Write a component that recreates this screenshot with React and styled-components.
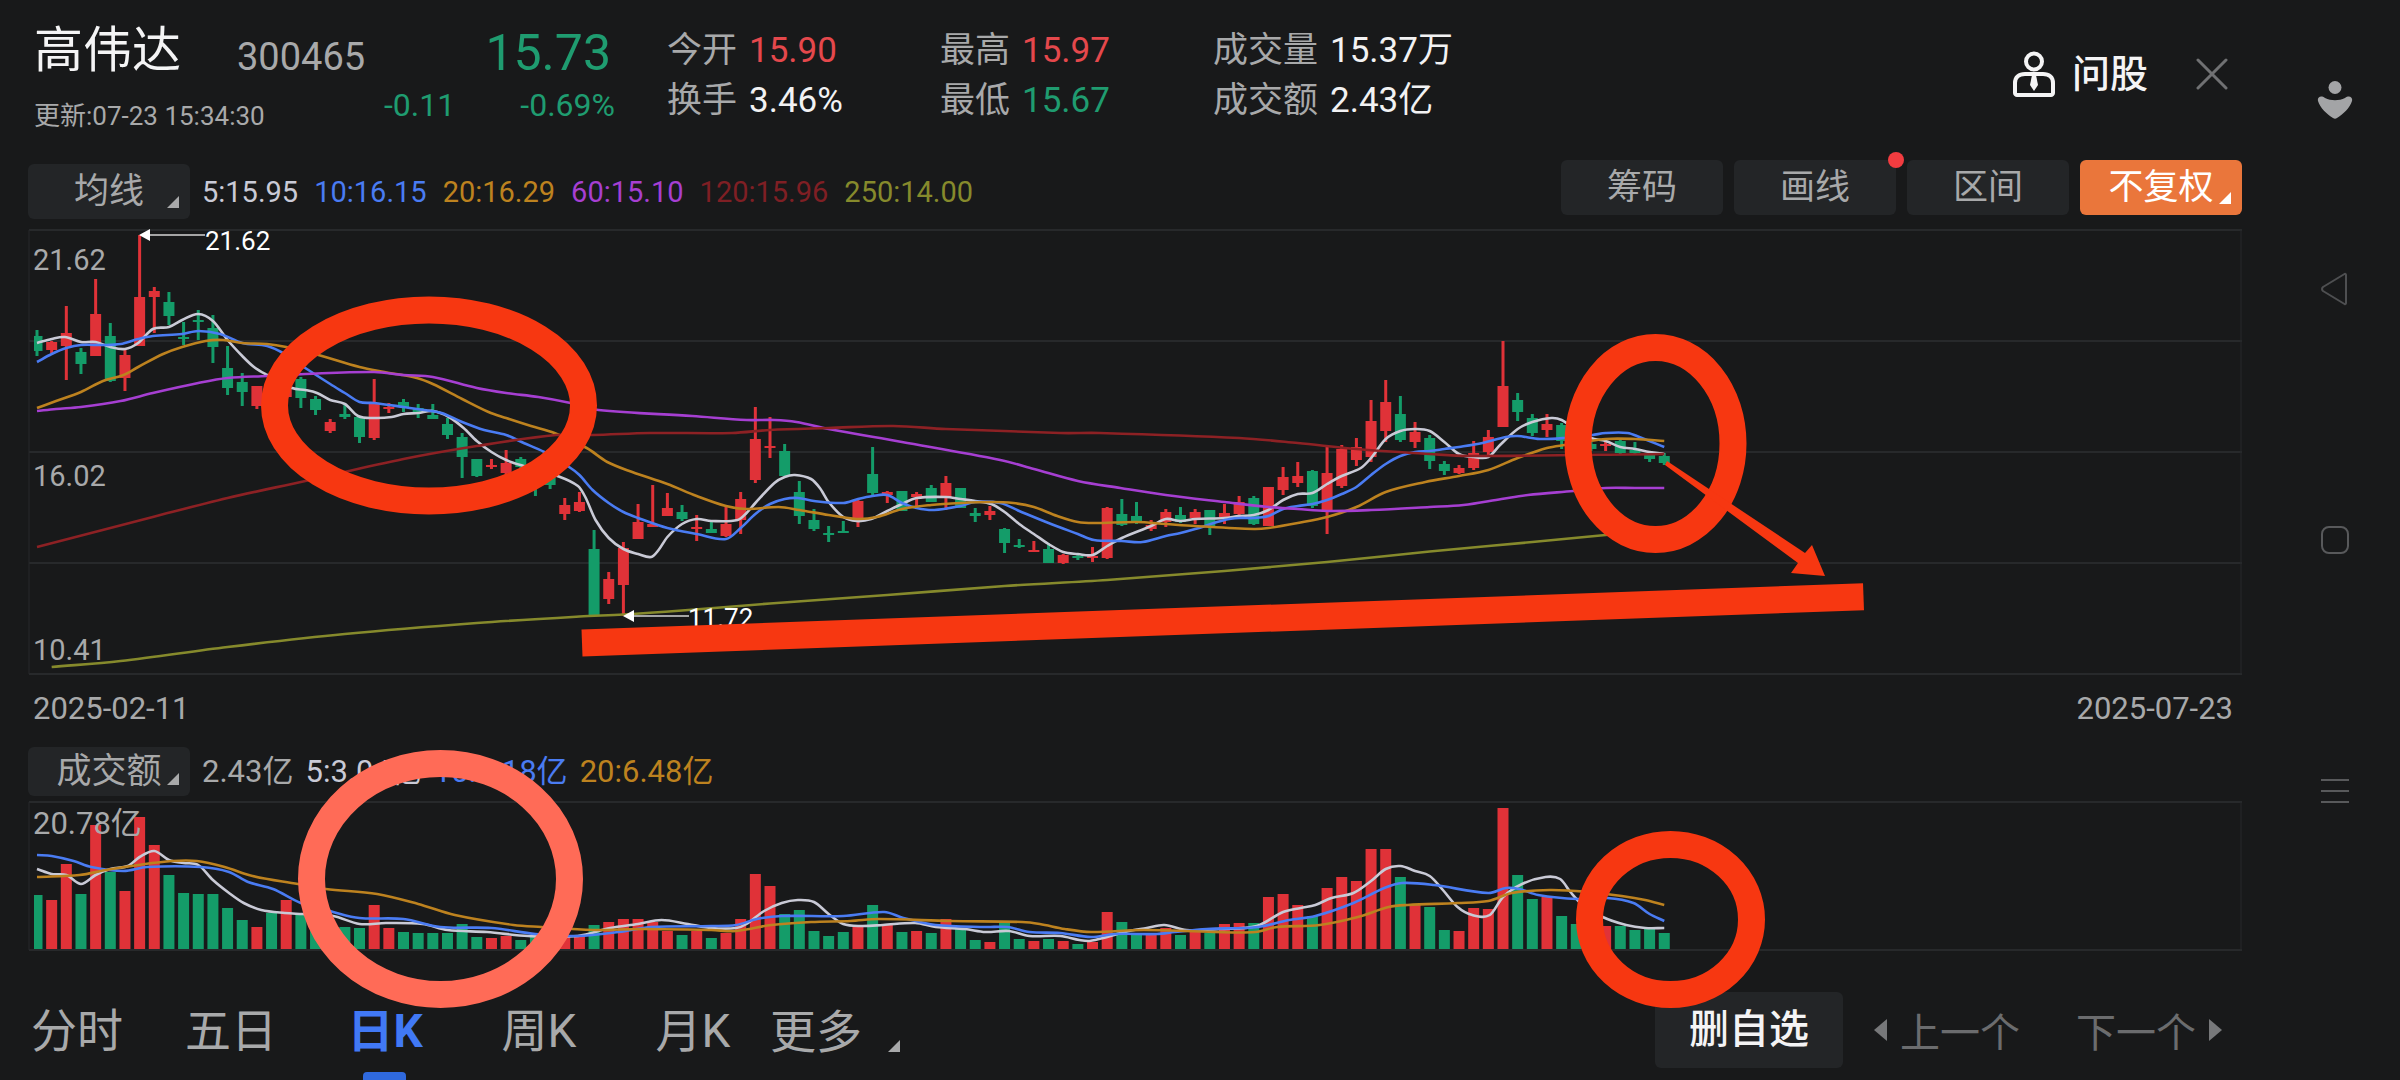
import React, { useState } from 'react';
import styled, { createGlobalStyle } from 'styled-components';

const UP = '#e03238';
const DOWN = '#149c69';
const MUTED = '#a8a9aa';
const LINE = '#27292b';
const MARK = '#f73711';

// [high, body top, body bottom, low, is up, turnover bar height]
const days = [
    [100, 106, 121, 126, 0, 54], [111, 112, 120, 123, 1, 49], [76, 103, 116, 150, 1, 85], [118, 122, 134, 144, 0, 55],
    [49, 84, 126, 126, 1, 124], [93, 106, 151, 152, 0, 77], [118, 125, 148, 161, 1, 58], [5, 67, 116, 116, 1, 132],
    [57, 61, 67, 103, 1, 104], [62, 72, 86, 95, 0, 74], [92, 107, 108, 115, 0, 56], [80, 90, 91, 110, 0, 55],
    [85, 98, 117, 133, 0, 55], [116, 138, 158, 165, 0, 41], [143, 152, 162, 176, 0, 29], [156, 156, 176, 179, 1, 22],
    [150, 152, 170, 174, 0, 36], [158, 158, 167, 170, 1, 49], [147, 149, 168, 178, 0, 34], [166, 169, 180, 185, 0, 22],
    [189, 192, 201, 203, 1, 26], [175, 184, 187, 189, 0, 22], [187, 187, 207, 213, 0, 21], [149, 173, 208, 210, 1, 44],
    [173, 177, 178, 183, 1, 21], [169, 172, 177, 182, 0, 17], [174, 178, 182, 188, 0, 16], [174, 185, 189, 189, 0, 16],
    [188, 194, 205, 209, 0, 16], [203, 207, 227, 248, 0, 25], [229, 229, 246, 247, 0, 12], [229, 235, 237, 239, 1, 11],
    [220, 233, 243, 245, 1, 13], [227, 229, 237, 238, 0, 9], [233, 238, 255, 266, 0, 13], [240, 243, 255, 259, 0, 12],
    [268, 275, 284, 290, 1, 12], [262, 272, 281, 282, 1, 12], [300, 319, 385, 385, 0, 24], [342, 349, 369, 374, 1, 27],
    [312, 318, 355, 386, 1, 30], [274, 292, 309, 309, 1, 30], [255, 294, 297, 297, 1, 27], [263, 278, 286, 286, 1, 18],
    [275, 282, 289, 291, 0, 14], [285, 297, 298, 311, 1, 18], [292, 299, 303, 303, 0, 11], [277, 294, 306, 307, 1, 16],
    [262, 269, 290, 304, 1, 30], [177, 209, 250, 253, 1, 75], [187, 216, 218, 228, 1, 63], [214, 221, 246, 246, 0, 35],
    [251, 262, 286, 294, 0, 39], [279, 290, 299, 301, 0, 18], [296, 303, 304, 312, 0, 13], [291, 301, 303, 303, 0, 17],
    [269, 271, 290, 297, 1, 23], [217, 244, 263, 265, 0, 44], [261, 262, 265, 273, 1, 25], [261, 261, 281, 281, 0, 17],
    [262, 264, 267, 277, 1, 18], [255, 258, 272, 272, 0, 16], [246, 253, 268, 280, 1, 30], [258, 258, 278, 278, 0, 20],
    [278, 283, 286, 292, 0, 9], [276, 281, 285, 290, 1, 7], [298, 299, 313, 323, 0, 27], [309, 315, 316, 318, 0, 10],
    [311, 320, 322, 322, 1, 8], [313, 319, 333, 333, 0, 10], [324, 325, 333, 334, 1, 8], [324, 326, 328, 330, 0, 5],
    [317, 326, 327, 332, 1, 7], [277, 278, 328, 329, 1, 37], [269, 284, 295, 296, 0, 27], [272, 286, 291, 294, 0, 16],
    [290, 295, 299, 301, 1, 15], [279, 282, 292, 297, 1, 21], [277, 285, 292, 293, 0, 14], [279, 282, 288, 294, 1, 17],
    [280, 280, 297, 305, 0, 16], [274, 283, 287, 294, 1, 25], [266, 272, 284, 285, 1, 26], [266, 268, 294, 295, 0, 26],
    [257, 257, 296, 296, 1, 52], [237, 247, 260, 265, 1, 55], [232, 246, 253, 257, 1, 44], [240, 241, 276, 278, 0, 33],
    [217, 243, 282, 304, 1, 61], [215, 219, 256, 258, 1, 72], [208, 217, 230, 236, 1, 68], [170, 191, 227, 232, 1, 100],
    [150, 172, 201, 212, 1, 100], [166, 184, 210, 212, 0, 72], [192, 202, 212, 218, 1, 44], [205, 208, 231, 239, 0, 42],
    [231, 234, 241, 245, 0, 19], [235, 238, 243, 244, 1, 18], [211, 223, 238, 240, 1, 41], [200, 207, 222, 225, 1, 40],
    [111, 156, 197, 197, 1, 141], [163, 170, 182, 191, 0, 74], [184, 188, 203, 206, 0, 50], [184, 194, 200, 207, 1, 52],
    [193, 195, 211, 219, 0, 33], [205, 208, 218, 222, 0, 25], [212, 214, 219, 221, 0, 25], [212, 214, 216, 221, 1, 23],
    [210, 211, 223, 225, 0, 23], [212, 220, 223, 225, 0, 19], [223, 225, 229, 232, 0, 20], [223, 226, 233, 235, 0, 16],
];

// flat lists of day index, y
const priceLines = [
    { color: '#868a2c', pts: [1, 437, 5.7, 431, 13, 417, 21, 404, 30, 393, 37, 386.5, 40, 384.5, 44, 380.5, 50, 373.5, 58, 365, 66, 356, 73, 350, 81, 341, 88, 332, 95, 321.5, 102, 312, 107, 305, 109, 302] },
    { color: '#c9cad6', pts: [0, 113, 1, 109, 1.9, 107, 3, 112, 4, 112, 5, 117, 6, 119, 6.9, 113, 7.9, 99, 9, 97, 9.9, 90, 11, 84, 12, 91, 13, 110, 14, 126, 14.8, 137, 15.7, 145, 17.4, 158, 18.3, 160, 19.1, 163, 20, 170, 21, 174, 21.9, 186, 23, 188, 24.2, 187, 25, 184, 26, 183, 27, 181, 28.1, 187, 29.1, 198, 30, 211, 31, 222, 32, 230, 33.2, 236, 35.5, 246, 36.9, 256, 37.4, 267, 38.1, 290, 39, 308, 40, 319, 41, 324, 41.9, 327, 42.4, 320, 43, 307, 44, 294, 45, 289, 46, 291, 47.8, 290, 48.4, 283, 49, 273, 50.3, 253, 51, 247, 51.7, 245, 52.8, 249, 53.4, 258, 54, 272, 55, 287, 55.9, 291, 56.9, 289, 58, 281, 59, 274, 60, 268, 62, 267, 63, 269, 64, 271, 65.1, 274, 66, 282, 67, 294, 68, 304, 69, 314, 70, 322, 71, 324, 72, 325, 73, 316, 74, 308, 76, 296, 77, 289, 78, 291, 79, 289, 81, 288, 82, 286, 83, 285, 84, 280, 85, 270, 86, 264, 87, 263, 88, 254, 89, 246, 90.3, 238, 91, 228, 92, 209, 93, 201, 94, 199, 95, 201, 96, 212, 97, 224, 98, 227, 99, 227, 99.8, 215, 101, 199, 102, 192, 103.3, 188, 104, 190, 105, 200, 106, 208, 107, 211, 108, 217, 109, 219, 110, 222, 111, 224] },
    { color: '#4a7cf3', pts: [0, 132, 1, 124, 2, 118, 3, 115, 4.5, 115, 5.7, 114, 6.9, 109, 7.9, 106, 9.9, 104, 11, 101, 12.5, 104, 14, 113, 15.7, 116, 16.9, 124, 18.3, 138, 20, 154, 21, 163, 22, 172, 23, 173, 25, 177, 26.4, 180, 27.6, 183, 29, 192, 30.5, 200, 32, 205, 33.2, 213, 34.6, 222, 36.2, 236, 37, 245, 37.9, 260, 39, 273, 40, 282, 41, 288, 43, 298, 45, 304, 47, 309, 48, 298, 49, 284, 50, 274, 51, 269, 51.9, 268, 53, 271, 55, 273, 56, 269, 57, 266, 58, 265, 59, 273, 60, 278, 61.2, 280, 63, 276, 64, 272, 65.7, 273, 67, 281, 69, 293, 71, 304, 72.1, 310, 74, 311, 75.4, 312, 77, 306, 78, 303, 79, 299, 81, 290, 82, 288, 83, 288, 84, 286, 85, 279, 86, 276, 87, 274, 88, 270, 89, 264, 90, 257, 91, 245, 92, 234, 93, 226, 94, 222, 95, 221, 96, 219, 97, 217, 98.6, 213, 100.2, 207, 101, 206, 102.5, 209, 104.2, 208, 106.1, 205, 107, 203, 108.5, 203, 109.3, 207, 111, 217] },
    { color: '#bd821f', pts: [0, 178, 1.3, 171, 3, 162, 4.5, 151, 5.9, 145, 6.9, 137, 8.6, 124, 9.9, 117, 11.5, 111, 12.7, 110, 14, 113, 15.7, 114, 17, 117, 19.2, 125, 22, 137, 23.7, 142, 25.9, 148, 27, 154, 29, 169, 30.8, 182, 32, 188, 33.7, 196, 35.3, 203, 37.5, 218, 38.9, 232, 40.6, 242, 43, 254, 45, 266, 47, 276, 48.4, 279, 50.6, 277, 52, 280, 54, 285, 55.9, 289, 57.3, 287, 59, 279, 61, 275, 63, 273, 65, 272, 66.6, 273, 68, 277, 69.6, 286, 71, 292, 72.1, 293, 75, 292, 77, 294, 79, 296, 83, 299, 84, 298, 86, 293, 88, 287, 90, 277, 92, 262, 94.7, 252, 97, 246, 99, 240, 101, 228, 103, 218, 104.2, 215, 107, 209, 109, 209, 111, 211] },
    { color: '#a63fd2', pts: [0, 181, 1.3, 179, 3, 177, 5.7, 171, 7.9, 163, 11, 153, 13, 148, 15.7, 146, 18.3, 144, 23, 142, 25, 145, 27, 147, 30, 158, 32, 163, 34.2, 167, 36.4, 173, 38.3, 180, 44.7, 186, 48.4, 190, 50.3, 190, 51.8, 192, 54, 199, 59, 212, 65.7, 230, 68, 239, 71, 251, 73.9, 258, 77, 265, 81, 272, 84, 277, 86, 279, 88, 281, 91, 280, 95, 277, 97.3, 275, 99.9, 269, 101.7, 265, 104.8, 261, 107, 258, 109, 258, 111, 258] },
    { color: '#8d2124', pts: [0, 317, 7.9, 287, 13, 268, 18.3, 251, 25, 229, 30, 216, 35.4, 205, 37.9, 205, 41.8, 203, 47.4, 203, 50, 200, 54, 198, 58.4, 196, 62, 199, 69.8, 203, 72.5, 203, 82, 208, 86, 213, 90, 219, 95, 224, 97.6, 226, 111, 224] },
];

const turnoverLines = [
    { color: '#c9cad6', pts: [0, 67, 1, 72, 2, 73, 3, 82, 4, 73, 5, 67, 6.2, 64, 7, 55, 8, 49, 9, 58, 10, 61, 11, 63, 12, 78, 13.1, 91, 14.1, 101, 15.3, 108, 16.9, 111, 18.1, 112, 20.2, 114, 22, 122, 23.8, 121, 26.3, 122, 28, 128, 30.7, 130, 33.5, 134, 36.9, 134, 39.1, 126, 41, 122, 42.6, 118, 44.4, 122, 46, 126, 47.7, 126, 48.4, 122, 49.6, 109, 50.8, 101, 51.9, 98, 53, 100, 54, 112, 55, 122, 56.2, 124, 57.7, 123, 59.9, 121, 61.3, 125, 63.3, 127, 64.7, 130, 66.3, 129, 67.7, 134, 69.8, 134, 71.1, 138, 71.8, 139, 73, 135, 74.2, 130, 75.7, 126, 76.9, 123, 78.4, 128, 80.7, 127, 83.2, 124, 85, 110, 86.2, 106, 87.2, 103, 88.3, 96, 89.8, 91, 91, 79, 92, 67, 93, 64, 94, 69, 95, 74, 95.9, 88, 96.9, 105, 97.9, 113, 99.1, 113, 100, 95, 101.3, 82, 102.9, 75, 103.9, 77, 104.6, 90, 105.3, 101, 106.8, 115, 108.4, 123, 109.7, 126, 111, 126] },
    { color: '#4a7cf3', pts: [0, 53, 1, 54, 2.5, 59, 3.7, 65, 5.9, 69, 7.5, 65, 11.2, 65, 13.1, 70, 14.4, 80, 16.1, 87, 18, 101, 20.2, 110, 22, 116, 25, 117, 27.5, 125, 31, 126, 34, 132, 36.9, 134, 39.7, 130, 41.9, 125, 46, 124, 47.7, 123, 49.1, 117, 50.8, 114, 55, 114, 57.8, 110, 59.1, 116, 61.3, 123, 64.7, 125, 66.2, 125, 67.7, 130, 69.8, 131, 71.9, 135, 73.5, 132, 76.4, 132, 77.6, 130, 79.8, 127, 83.3, 125, 85.4, 118, 87.2, 114, 89.8, 101, 91.9, 86, 93.1, 81, 95.3, 83, 99, 91, 100.2, 86, 101.1, 87, 102.4, 93, 105.1, 97, 107.1, 96, 108.9, 101, 110, 112, 111, 119] },
    { color: '#bd821f', pts: [0, 75, 2.9, 73, 4.7, 68, 6.9, 63, 9.2, 59, 10.9, 59, 12.8, 65, 14.7, 74, 17.8, 82, 19.7, 87, 23.2, 92, 26, 102, 28.5, 113, 32.5, 123, 34.4, 125, 37.9, 128, 41.3, 127, 46, 128, 47.7, 129, 50.1, 123, 52.8, 120, 55.5, 119, 57.4, 117, 62.3, 119, 67.2, 120, 68.4, 122, 70.1, 127, 71.9, 130, 75.5, 128, 80.3, 130, 83.1, 130, 84.6, 125, 87.5, 123, 90.1, 115, 92.2, 105, 93.5, 103, 96.9, 101, 99, 99, 100.6, 91, 103.2, 88, 105.8, 90, 108.1, 94, 109.7, 98, 111, 103] },
];

const averages = [
    ['5:15.95', '#c9cad6'],
    ['10:16.15', '#4a7cf3'],
    ['20:16.29', '#bd821f'],
    ['60:15.10', '#a63fd2'],
    ['120:15.96', '#7f1f24'],
    ['250:14.00', '#868a2c'],
];

const turnovers = [
    ['2.43亿', MUTED],
    ['5:3.04亿', '#c9cad6'],
    ['10:4.18亿', '#4a7cf3'],
    ['20:6.48亿', '#bd821f'],
];

const stats = [
    ['今开', '15.90', '#e5484c'],
    ['最高', '15.97', '#e5484c'],
    ['成交量', '15.37万', '#f2f2f3'],
    ['换手', '3.46%', '#f2f2f3'],
    ['最低', '15.67', '#1f9c70'],
    ['成交额', '2.43亿', '#f2f2f3'],
];

const periods = ['分时', '五日', '日K', '周K', '月K'];

const STEP = 14.66;
const dayX = (i) => 9 + i * STEP;

// smooth curve through every point
const curve = (flat) => {
    const p = [];
    for (let i = 0; i < flat.length; i += 2) p.push([dayX(flat[i]), flat[i + 1]]);
    let d = `M${p[0][0]} ${p[0][1]}`;
    for (let i = 0; i < p.length - 1; i++) {
        const a = p[i - 1] || p[i];
        const b = p[i];
        const c = p[i + 1];
        const e = p[i + 2] || c;
        const third = (c[0] - b[0]) / 3;
        const s1 = (c[1] - a[1]) / (c[0] - a[0]);
        const s2 = (e[1] - b[1]) / (e[0] - b[0]);
        d += `C${b[0] + third} ${b[1] + s1 * third} ${c[0] - third} ${c[1] - s2 * third} ${c[0]} ${c[1]}`;
    }
    return d;
};

function Curves({ lines }) {
    return lines.map((l) => (
        <path key={l.color} d={curve(l.pts)} fill="none" stroke={l.color} strokeWidth="2.6" />
    ));
}

function PriceChart() {
    return (
        <Chart viewBox="0 -1 2214 446" role="img" aria-label="日K">
            <clipPath id="plot"><rect x="6" y="-1" width="2208" height="446" /></clipPath>
            <g stroke={LINE} strokeWidth="2">
                {[0, 111, 222, 333, 444].map((y) => <line key={y} x1="1" x2="2214" y1={y} y2={y} />)}
                <path d="M1 0V444M2213 0V444" strokeWidth="1" />
            </g>
            <g clipPath="url(#plot)">
                {days.map(([high, top, bottom, low, up], i) => (
                    <g key={i} fill={up ? UP : DOWN}>
                        <rect x={dayX(i) - 1.5} y={high} width="3" height={low - high} />
                        <rect x={dayX(i) - 5.5} y={top} width="11" height={Math.max(bottom - top, 2)} />
                    </g>
                ))}
            </g>
            <Curves lines={priceLines} />
            <path d="M121 5H177M605 386H661" stroke="#a5a5a5" strokeWidth="2" />
            <path d="M111 5L122 -1V11ZM595 386L606 380V392Z" fill="#fff" />
            <CalloutText x="177" y="20">21.62</CalloutText>
            <CalloutText x="660" y="397">11.72</CalloutText>
            <AxisText x="5" y="40">21.62</AxisText>
            <AxisText x="5" y="256">16.02</AxisText>
            <AxisText x="5" y="430">10.41</AxisText>
        </Chart>
    );
}

function TurnoverChart() {
    return (
        <Chart viewBox="0 -1 2214 150" role="img" aria-label="成交额">
            <clipPath id="bars"><rect x="6" y="-1" width="2208" height="150" /></clipPath>
            <path d="M1 0H2214M1 148H2214" stroke={LINE} strokeWidth="2" />
            <path d="M1 0V148M2213 0V148" stroke={LINE} />
            <g clipPath="url(#bars)">
                {days.map((d, i) => (
                    <rect key={i} x={dayX(i) - 5.5} y={147 - d[5]} width="11" height={d[5]} fill={d[4] ? UP : DOWN} />
                ))}
            </g>
            <Curves lines={turnoverLines} />
            <AxisText $wide x="5" y="32">20.78亿</AxisText>
        </Chart>
    );
}

function Marks() {
    return (
        <MarkLayer viewBox="0 0 2400 1080" aria-hidden="true">
            <g fill="none" stroke={MARK} strokeWidth="27">
                <ellipse cx="429" cy="405.5" rx="154.5" ry="95.5" />
                <ellipse cx="1655.5" cy="443.5" rx="77.5" ry="96" />
                <ellipse cx="440.5" cy="879" rx="129" ry="115.5" stroke="#ff6b57" />
                <ellipse cx="1670.5" cy="919.5" rx="81" ry="75" />
                <path d="M582 643L1863.5 596.7" />
            </g>
            <path d="M1667 461L1805 553L1812 545L1825 576L1791 573L1798 563L1665 465Z" fill={MARK} />
        </MarkLayer>
    );
}

function App() {
    const [period, setPeriod] = useState('日K');

    return (
        <Page>
            <GlobalStyle />
            <Main>
                <Header>
                    <Identity>
                        <TitleRow>
                            <Name>高伟达</Name>
                            <Code>300465</Code>
                        </TitleRow>
                        <Updated>更新:07-23 15:34:30</Updated>
                    </Identity>
                    <Quote>
                        <Price>15.73</Price>
                        <Change>
                            <span>-0.11</span>
                            <span>-0.69%</span>
                        </Change>
                    </Quote>
                    <Stats>
                        {stats.map(([label, value, color]) => (
                            <Stat key={label}>
                                <dt>{label}</dt>
                                <StatValue $color={color}>{value}</StatValue>
                            </Stat>
                        ))}
                    </Stats>
                    <Actions>
                        <AskButton>
                            <svg width="42" height="46" viewBox="0 0 42 46" fill="none" stroke="#f4f4f5" strokeWidth="4">
                                <circle cx="21" cy="10.5" r="8" />
                                <path d="M2 42V32C2 26 6 23 12 23H30C36 23 40 26 40 32V42C40 43 39 44 38 44H4C3 44 2 43 2 42Z" />
                                <path d="M19 24H23L25 34L21 40L17 34Z" fill="#f4f4f5" stroke="none" />
                            </svg>
                            问股
                        </AskButton>
                        <IconButton aria-label="关闭">
                            <svg width="32" height="32" viewBox="0 0 32 32" fill="none" stroke="#707173" strokeWidth="3" strokeLinecap="round">
                                <path d="M2 2L30 30M30 2L2 30" />
                            </svg>
                        </IconButton>
                    </Actions>
                </Header>

                <Toolbar>
                    <Legend>
                        <Chip $corner>均线</Chip>
                        {averages.map(([text, color]) => <LegendItem key={text} $color={color}>{text}</LegendItem>)}
                    </Legend>
                    <Tools>
                        <Chip>筹码</Chip>
                        <Chip $dot>画线</Chip>
                        <Chip>区间</Chip>
                        <Chip $corner $active>不复权</Chip>
                    </Tools>
                </Toolbar>
                <ChartBox><PriceChart /></ChartBox>
                <Dates>
                    <time>2025-02-11</time>
                    <time>2025-07-23</time>
                </Dates>

                <TurnoverBar>
                    <Chip $corner $low>成交额</Chip>
                    {turnovers.map(([text, color]) => <LegendItem key={text} $wide $color={color}>{text}</LegendItem>)}
                </TurnoverBar>
                <ChartBox><TurnoverChart /></ChartBox>

                <Footer>
                    <Periods>
                        {periods.map((p) => (
                            <Period key={p} $active={p === period} onClick={() => setPeriod(p)}>{p}</Period>
                        ))}
                        <More>更多</More>
                    </Periods>
                    <Remove>删自选</Remove>
                    <Step>
                        <svg width="13" height="22" viewBox="0 0 13 22" fill="#77787a"><path d="M13 0V22L0 11Z" /></svg>
                        上一个
                    </Step>
                    <Step $next>
                        下一个
                        <svg width="13" height="22" viewBox="0 0 13 22" fill="#77787a"><path d="M0 0V22L13 11Z" /></svg>
                    </Step>
                </Footer>
            </Main>

            <SystemBar>
                <SystemButton aria-label="助手" $first>
                    <svg width="36" height="38" viewBox="0 0 36 38" fill="#a3a4a6">
                        <circle cx="18" cy="6.5" r="6.5" />
                        <path d="M1 20C0 16 4 14 8 17C14 20 22 20 28 17C32 14 36 16 35 20C33 27 26 33 20 37Q18 38.500 16 37C10 33 3 27 1 20Z" />
                    </svg>
                </SystemButton>
                <SystemButton aria-label="返回">
                    <svg width="30" height="34" viewBox="0 0 30 34" fill="none" stroke="#4e4f51" strokeWidth="2" strokeLinejoin="round">
                        <path d="M26 3V31Q26 32.500 24.500 32L3 19Q1 17 3 15L24.500 2Q26 1.500 26 3Z" />
                    </svg>
                </SystemButton>
                <SystemButton aria-label="主页">
                    <svg width="28" height="28" viewBox="0 0 28 28" fill="none" stroke="#58595b" strokeWidth="2">
                        <rect x="1" y="1" width="26" height="26" rx="7" />
                    </svg>
                </SystemButton>
                <SystemButton aria-label="菜单">
                    <svg width="28" height="26" viewBox="0 0 28 26" stroke="#58595b" strokeWidth="2">
                        <path d="M0 2H28M0 13H28M0 24H28" />
                    </svg>
                </SystemButton>
            </SystemBar>
            <Marks />
        </Page>
    );
}

const GlobalStyle = createGlobalStyle`
    * {
        box-sizing: border-box;
    }
    body {
        margin: 0;
        background: #18191a;
        color: ${MUTED};
        font-family: Roboto, "Noto Sans CJK SC", sans-serif;
    }
    button {
        padding: 0;
        border: 0;
        background: none;
        color: inherit;
        font: inherit;
        cursor: pointer;
    }
    svg {
        display: block;
        flex: none;
    }
`;

const Page = styled.div`
    position: relative;
    display: flex;
    overflow: hidden;
`;

const Main = styled.main`
    flex: 1;
    min-width: 0;
`;

const Header = styled.header`
    display: flex;
    padding: 22px 42px 26px 34px;
    white-space: nowrap;
`;

const Identity = styled.div`
    width: 350px;
`;

const TitleRow = styled.div`
    display: flex;
    align-items: flex-end;
    gap: 56px;
`;

const Name = styled.h1`
    margin: 0;
    color: #f4f4f5;
    font-size: 49px;
    font-weight: 400;
    line-height: 58px;
`;

const Code = styled.span`
    font-size: 38px;
    line-height: 46px;
`;

const Updated = styled.div`
    margin-top: 18px;
    font-size: 26px;
    line-height: 36px;
`;

const Quote = styled.div`
    width: 231px;
    color: #1f9c70;
`;

const Price = styled.div`
    padding-right: 4px;
    font-size: 50px;
    line-height: 62px;
    text-align: right;
`;

const Change = styled.div`
    display: flex;
    justify-content: space-between;
    font-size: 32px;
    line-height: 42px;
`;

const Stats = styled.dl`
    display: grid;
    grid-template-columns: repeat(3, 273px);
    grid-auto-rows: 50px;
    margin: 4px 0 0 52px;
    font-size: 35px;
    line-height: 50px;
`;

const Stat = styled.div`
    display: flex;
    gap: 12px;
`;

const StatValue = styled.dd`
    margin: 0;
    color: ${(props) => props.$color};
`;

const Actions = styled.div`
    display: flex;
    align-items: center;
    gap: 48px;
    height: 50px;
    margin: 27px 0 0 auto;
`;

const AskButton = styled.button`
    display: flex;
    align-items: center;
    gap: 17px;
    color: #f4f4f5;
    font-size: 38px;
    font-weight: 500;
    line-height: 50px;
`;

const IconButton = styled.button``;

const Toolbar = styled.div`
    display: flex;
    justify-content: space-between;
    padding: 0 28px 10px;
`;

const Legend = styled.div`
    display: flex;
    align-items: center;
    gap: 16px;
    padding-top: 4px;
`;

const LegendItem = styled.span`
    color: ${(props) => props.$color};
    font-size: ${(props) => (props.$wide ? 31 : 29)}px;
    line-height: 40px;
    white-space: nowrap;
`;

const Tools = styled.div`
    display: flex;
    align-items: flex-start;
    gap: 11px;
`;

const Chip = styled.button`
    position: relative;
    width: 162px;
    height: ${(props) => (props.$low ? 49 : 55)}px;
    border-radius: 6px;
    background: ${(props) => (props.$active ? '#ea763b' : '#232527')};
    color: ${(props) => (props.$active ? '#fff' : MUTED)};
    font-size: 35px;
    line-height: 48px;

    &::after {
        content: "";
        display: ${(props) => (props.$corner || props.$dot ? 'block' : 'none')};
        position: absolute;
        right: ${(props) => (props.$dot ? -8 : 11)}px;
        ${(props) => (props.$dot ? 'top: -8px;' : 'bottom: 11px;')}
        width: ${(props) => (props.$dot ? 16 : 12)}px;
        height: ${(props) => (props.$dot ? 16 : 12)}px;
        border-radius: ${(props) => (props.$dot ? '50%' : 0)};
        background: ${(props) => (props.$dot ? '#f23c40' : 'currentColor')};
        clip-path: ${(props) => (props.$dot ? 'none' : 'polygon(100% 0, 100% 100%, 0 100%)')};
    }

    ${Legend} & {
        margin-right: -4px;
    }
`;

const ChartBox = styled.div`
    padding: 0 28px;
`;

const Chart = styled.svg`
    width: 100%;
    height: auto;
`;

const AxisText = styled.text`
    fill: ${MUTED};
    font-size: ${(props) => (props.$wide ? 31 : 29)}px;
`;

const CalloutText = styled.text`
    fill: #fff;
    font-size: 26px;
`;

const Dates = styled.div`
    display: flex;
    justify-content: space-between;
    padding: 12px 37px 0 33px;
    font-size: 31px;
    line-height: 44px;
`;

const TurnoverBar = styled.div`
    display: flex;
    align-items: center;
    gap: 12px;
    padding: 16px 28px 5px;
`;

const Footer = styled.footer`
    display: flex;
    align-items: flex-start;
    padding: 41px 48px 0 0;
    white-space: nowrap;
`;

const Periods = styled.nav`
    display: flex;
    margin-right: auto;
    font-size: 46px;
    line-height: 76px;
`;

const Period = styled.button`
    position: relative;
    width: 154px;
    height: 88px;
    padding-bottom: 10px;
    color: ${(props) => (props.$active ? '#4179f5' : 'inherit')};
    font-weight: ${(props) => (props.$active ? 700 : 400)};

    &::after {
        content: "";
        display: ${(props) => (props.$active ? 'block' : 'none')};
        position: absolute;
        bottom: 0;
        left: 55px;
        width: 43px;
        height: 8px;
        border-radius: 4px 4px 0 0;
        background: #2f69de;
    }
`;

const More = styled.button`
    display: flex;
    align-items: flex-end;
    gap: 26px;
    height: 78px;

    &::after {
        content: "";
        width: 12px;
        height: 12px;
        margin-bottom: 18px;
        background: currentColor;
        clip-path: polygon(100% 0, 100% 100%, 0 100%);
    }
`;

const Remove = styled.button`
    width: 188px;
    height: 76px;
    margin-right: 31px;
    border-radius: 6px;
    background: #232527;
    color: #f4f4f5;
    font-size: 40px;
    font-weight: 500;
    line-height: 74px;
`;

const Step = styled.button`
    display: flex;
    align-items: center;
    gap: 13px;
    height: 76px;
    margin-left: ${(props) => (props.$next ? 56 : 0)}px;
    color: #6b6c6e;
    font-size: 40px;
`;

const SystemBar = styled.aside`
    display: flex;
    flex-direction: column;
    align-items: center;
    gap: 203px;
    width: 130px;
    padding-top: 76px;
`;

const SystemButton = styled.button`
    display: flex;
    align-items: center;
    justify-content: center;
    width: 60px;
    height: 48px;
    margin-bottom: ${(props) => (props.$first ? -62 : 0)}px;
`;

const MarkLayer = styled.svg`
    position: absolute;
    top: 0;
    left: 0;
    width: 100%;
    height: auto;
    pointer-events: none;
`;

export default App;
